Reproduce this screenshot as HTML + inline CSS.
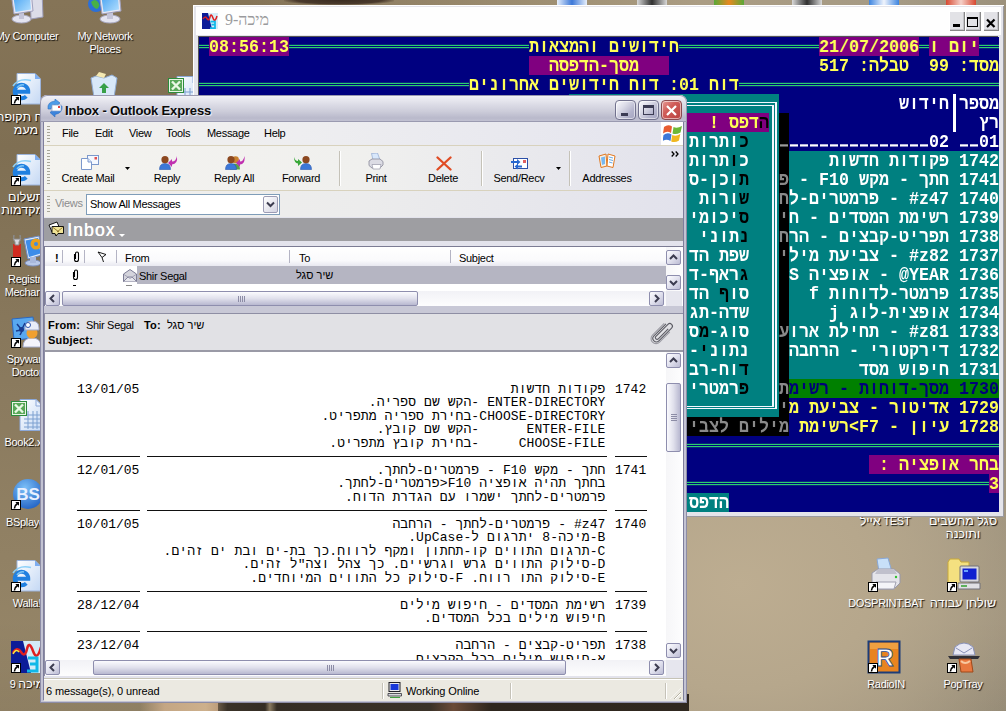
<!DOCTYPE html>
<html lang="he"><head><meta charset="utf-8"><title>Inbox - Outlook Express</title>
<style>
html,body{margin:0;padding:0}
body{width:1006px;height:711px;overflow:hidden;position:relative;font-family:"Liberation Sans",sans-serif;font-size:11px;color:#000;
background:radial-gradient(ellipse 330px 260px at 740px 585px,#bdad91 0,#b6a78c 40%,rgba(172,160,138,0) 100%),linear-gradient(180deg,rgba(0,0,0,0) 0,rgba(0,0,0,0) 620px,rgba(0,0,0,.06) 711px),linear-gradient(90deg,rgba(0,0,0,0) 0,rgba(0,0,0,0) 250px,#a39478 600px,#ab9d84 700px,#a59a84 900px,#9c917c 1006px),linear-gradient(180deg,#857457 0,#7f6f53 150px,#8b7b5f 400px,#978769 711px)}
.a{position:absolute}
/* ---- DOS window ---- */
#dos{position:absolute;left:193px;top:5px;width:811px;height:512px;background:#e4e4ea;box-shadow:inset 1px 1px 0 #fff,inset -1px -1px 0 #9a9aa2}
.dtitle{position:absolute;left:3px;top:2px;width:805px;height:28px;background:#fefefe}
.dicon{position:absolute;left:6px;top:6px;width:16px;height:16px}
.dtext{position:absolute;left:29px;top:4px;font-family:"Liberation Serif",serif;font-weight:normal;font-size:16px;color:#9a9a9c;direction:rtl;white-space:nowrap}
.dbtn{position:absolute;top:4px;width:16px;height:20px;background:#e2e2e6;box-shadow:inset 1px 1px 0 #fff,inset -1px -1px 0 #888,inset -2px -2px 0 #c4c4c8}
.dbtn i{position:absolute;font-style:normal}
.dbtn .mn{left:4px;top:13px;width:7px;height:3px;background:#000}
.dbtn .mx{left:2px;top:6px;border:1px solid #000;border-top-width:2px;box-sizing:border-box;width:11px;height:10px}
.dbtn .cx{left:2px;top:-1px;font-size:17px;font-weight:bold;line-height:19px}
#con{position:absolute;left:6px;top:32px;width:800px;height:425px;transform:scaleY(1.117647);transform-origin:0 0;background:#000080;overflow:hidden;direction:rtl;
font-family:"Liberation Mono",monospace;font-weight:bold;font-size:16.67px;line-height:17px;box-shadow:-1px -1px 0 #555}
.cr{position:absolute;left:0;width:800px;height:17px;white-space:pre;direction:rtl;overflow:hidden;font-size:0}
.sg{display:inline-block;height:17px;vertical-align:top;font-size:16.67px;line-height:17px;white-space:pre;direction:rtl;text-align:right;unicode-bidi:isolate;overflow:hidden;position:relative}
.sg b{font-weight:bold}
.dl i{position:absolute;left:0;right:0;top:7px;height:1px;border-top:1px solid #2fdc6e;border-bottom:1px solid #2fdc6e}
/* ---- Outlook Express window ---- */
#oe{position:absolute;left:40px;top:95px;width:647px;height:608px;background:#c3c3d3;border-radius:7px 7px 0 0;box-shadow:inset 0 0 0 1px #8d8da6;overflow:hidden}
#oe .tb{position:absolute;left:0;top:0;width:647px;height:27px;border-radius:7px 7px 0 0;
background:linear-gradient(#fbfbfd 0,#eeeef4 8%,#dcdce6 35%,#cdcdda 60%,#b9b9cb 85%,#c4c4d4 100%);box-shadow:inset 0 0 0 1px #9a9ab0}
#oe .tt{position:absolute;left:25px;top:8px;font-weight:bold;font-size:13px;color:#0a0a0a;white-space:nowrap;letter-spacing:-0.15px;text-shadow:1px 1px 1px #f4f4f8}
.cb{position:absolute;top:5px;width:21px;height:20px;border-radius:4px;box-sizing:border-box;border:1px solid #72728e;background:linear-gradient(135deg,#fbfbfe 0,#dcdce8 35%,#b4b4cc 70%,#a4a4c0 100%);box-shadow:inset 0 0 0 1px rgba(255,255,255,.55)}
.cb.x{background:linear-gradient(135deg,#e89c98 0,#d05c58 40%,#b84040 100%);border-color:#8a4a50}
#oe .cl{position:absolute;left:4px;top:27px;width:639px;height:578px;background:#e3e3ec;box-shadow:-1px 0 0 #7e7e9c,1px 0 0 #7e7e9c,0 1px 0 #7e7e9c}
.menu{position:absolute;left:0;top:0;width:639px;height:23px;background:linear-gradient(90deg,#f2f1ee 0,#eeeef0 40%,#e4e4ee 100%);border-bottom:1px solid #d8d2bd}
.menu span{position:absolute;top:5px;font-size:11px;white-space:nowrap}
.grip{position:absolute;width:3px;background:repeating-linear-gradient(#a8a698 0,#a8a698 1px,transparent 1px,transparent 3px)}
.tbar{position:absolute;left:0;top:24px;width:639px;height:44px;background:linear-gradient(90deg,#f4f3ef 0,#f0f0ee 50%,#e2e2ec 100%);border-bottom:1px solid #d8d2bd}
.tbtn{position:absolute;top:26px;font-size:11px;white-space:nowrap;transform:translateX(-50%)}
.tsep{position:absolute;top:5px;width:1px;height:35px;background:#c5c2b8;box-shadow:1px 0 0 #fff}
.vbar{position:absolute;left:0;top:69px;width:639px;height:26px;background:linear-gradient(90deg,#f1f0ec 0,#ececec 50%,#e2e2ec 100%)}
.combo{position:absolute;left:42px;top:3px;width:194px;height:21px;box-sizing:border-box;border:1px solid #7f9db9;background:#fff}
.combo span{position:absolute;left:3px;top:3px;font-size:11px;white-space:nowrap}
.cbtn{position:absolute;right:1px;top:1px;width:15px;height:17px;border-radius:2px;border:1px solid #9c9cb4;box-sizing:border-box;background:linear-gradient(135deg,#fff,#d4d4e2)}
.banner{position:absolute;left:0;top:96px;width:639px;height:23px;background:#9e9ea2}
.banner b{position:absolute;left:23px;top:3px;font-weight:normal;font-size:17.5px;line-height:19px;color:#fff;letter-spacing:1.15px !important;text-shadow:.4px 0 0 #fff}
#oe .cl, #oe .cl span{letter-spacing:-0.3px}
.he{font-size:12.5px;letter-spacing:0 !important}
#oe .cl b{letter-spacing:.2px}
/* list */
.list{position:absolute;left:0;top:124px;width:639px;height:60px;background:#fff;box-shadow:inset 1px 1px 0 #7c7c94}
.lh{position:absolute;left:1px;top:1px;width:621px;height:19px;background:linear-gradient(#fff 0,#fafafc 70%,#e8e8f0 100%)}
.lh span,.lr span{position:absolute;top:5px;font-size:11px;white-space:nowrap}
.lh i{position:absolute;top:3px;width:1px;height:13px;background:#b4b4c4}
.lr{position:absolute;left:1px;top:20px;width:621px;height:18px;background:#fff}
.lr .sel{position:absolute;left:92px;top:0;width:529px;height:18px;background:#b5b5c2}
.sb{position:absolute;background:linear-gradient(90deg,#f6f6f8,#fdfdfe)}
.sbb{position:absolute;width:15px;height:15px;box-sizing:border-box;border:1px solid #8e8eae;border-radius:2px;background:linear-gradient(135deg,#fdfdff 0,#e4e4f0 45%,#bcbcd4 100%)}
.sbb svg{position:absolute;left:0;top:0}
.thumb{position:absolute;box-sizing:border-box;border:1px solid #8e8eae;border-radius:2px}
.thumb.h{background:linear-gradient(#fbfbfe 0,#e0e0ec 50%,#b8b8d0 100%)}
.thumb.v{background:linear-gradient(90deg,#fbfbfe 0,#e0e0ec 50%,#b8b8d0 100%)}
.gh{position:absolute;width:7px;height:6px;background:repeating-linear-gradient(90deg,#8c8ca6 0,#8c8ca6 1px,transparent 1px,transparent 2px)}
.gv{position:absolute;width:6px;height:7px;background:repeating-linear-gradient(#8c8ca6 0,#8c8ca6 1px,transparent 1px,transparent 2px)}
.split{position:absolute;left:0;top:184px;width:639px;height:7px;background:#c8c8d6}
.ph{position:absolute;left:0;top:191px;width:639px;height:39px;background:#e1e1e5;box-shadow:inset 1px 1px 0 #8e8ea4,inset 0 -2px 0 #9a9aa6}
.ph span{position:absolute;font-size:11px;white-space:nowrap}
.ph b{font-weight:bold}
.body{position:absolute;left:0;top:230px;width:639px;height:324px;background:#fff;box-shadow:inset 1px 0 0 #8e8ea4;overflow:hidden}
.mt{position:absolute;left:33px;top:0;width:570px;font-family:"Liberation Mono",monospace;font-size:13px;line-height:13.5px;letter-spacing:0 !important;white-space:pre}
.mt div{position:absolute;height:14px;line-height:14px;white-space:pre;letter-spacing:0}
.mt .d{left:0;width:63px}
.mt .t{letter-spacing:.09px;left:68px;width:460.5px;direction:rtl;text-align:right;unicode-bidi:isolate}
.mt .n{left:538px;width:32px}
.mt hr{position:absolute;margin:0;border:0;height:1px;background:#111}
.status{position:absolute;left:0;top:556px;width:639px;height:22px;background:#ebe9e1;border-top:1px solid #c6c3b6;box-shadow:inset 0 1px 0 #fff}
.status span{position:absolute;top:6px;font-size:11px;white-space:nowrap;letter-spacing:-.12px !important}
.status i.s{position:absolute;top:4px;width:1px;height:16px;background:#c5c2b8;box-shadow:1px 0 0 #fff}
.ico{position:absolute;overflow:visible}
.ico svg{position:absolute;left:0;top:0;overflow:visible}
.ico .scx{left:0;top:auto;bottom:0}
.lbl{position:absolute;text-align:center;color:#fff;font-size:11px;line-height:13px;white-space:nowrap;letter-spacing:-.3px;text-shadow:1px 1px 1px rgba(0,0,0,.95)}
.fr{position:absolute;box-sizing:border-box;border:solid #f4f8ff}

</style></head>
<body>
<svg width="0" height="0" style="position:absolute">
<defs>
<linearGradient id="gPage" x1="0" y1="0" x2="1" y2="1"><stop offset="0" stop-color="#ffffff"/><stop offset="1" stop-color="#c4d8f4"/></linearGradient>
<linearGradient id="gScr" x1="0" y1="0" x2="1" y2="1"><stop offset="0" stop-color="#3c9cf0"/><stop offset="1" stop-color="#b4e0ff"/></linearGradient>
<radialGradient id="gBS" cx=".4" cy=".3" r=".8"><stop offset="0" stop-color="#7cc0f8"/><stop offset="1" stop-color="#1c5cc0"/></radialGradient>
</defs></svg>

<div class="ico" style="left:11px;top:-10px;width:34px;height:34px"><svg width="34" height="34" viewBox="0 0 34 34"><path d="M19 0H31L32 27 20 29Z" fill="#dcdce8" stroke="#9c9cb8"/><path d="M22 6H29M22 9H29" stroke="#8888a8"/>
<ellipse cx="10.500" cy="29" rx="9.500" ry="4" fill="#e4e4f0" stroke="#a8a8c0"/><path d="M8 22H13V29H8Z" fill="#c4c4d8"/><path d="M0 2L20 0 22 21 3 24Z" fill="#e8e8f4" stroke="#a0a0bc"/><path d="M2 3.500L18.500 2 20 19.500 4.500 22Z" fill="url(#gScr)"/></svg></div>
<div class="lbl" style="left:-18px;top:30px;width:90px">My Computer</div>
<div class="ico" style="left:88px;top:-10px;width:34px;height:34px"><svg width="34" height="34" viewBox="0 0 34 34"><circle cx="8" cy="14" r="8" fill="#2c70d8"/><path d="M3 12Q7 8 10 12T9 19Q5 18 3 12Z" fill="#48b048"/>
<ellipse cx="22" cy="29" rx="10" ry="4" fill="#e4e4f0" stroke="#a8a8c0"/><path d="M19 22H25V29H19Z" fill="#c4c4d8"/><path d="M11 2L31 0 33 21 14 24Z" fill="#e8e8f4" stroke="#a0a0bc"/><path d="M13 3.500L29.500 2 31 19.500 15.500 22Z" fill="url(#gScr)"/></svg></div>
<div class="lbl" style="left:60px;top:30px;width:90px">My Network<br>Places</div>
<div class="ico" style="left:11px;top:73px;width:32px;height:32px"><svg width="32" height="32" viewBox="0 0 32 32"><path d="M6 .5H24L29.500 6V31H6Z" fill="url(#gPage)" stroke="#9cb4dc"/><path d="M24 .5V6H29.500Z" fill="#7cacf0"/>
<path d="M2 13Q8 4.500 20 7.500" stroke="#8cd0f8" stroke-width="1.600" fill="none"/><path d="M3.700 18.800H17.300A6.800 6.800 0 1 0 15.310 23.310" stroke="#2080e0" stroke-width="3.900" fill="none"/><path d="M6 15Q9 11 13 12" stroke="#7cc4f4" stroke-width="1.500" fill="none"/></svg><svg class="scx" width="10" height="10" viewBox="0 0 10 10"><rect x=".5" y=".5" width="9" height="9" fill="#fff" stroke="#000"/><path d="M8 2H4.300L5.500 3.200Q2.600 5 2.600 8.400H4.200Q4.200 6 6.700 4.400L8 5.700Z" fill="#000"/></svg></div>
<div class="lbl" dir="rtl" style="left:-10px;top:111px;width:72px"><span class="he">דיווח תקופתי</span><br><span class="he">מעמ</span></div>
<div class="ico" style="left:90px;top:74px;width:28px;height:32px"><svg width="28" height="32" viewBox="0 0 28 32"><path d="M1 4L6 2 14 4 22 1 27 4 23 30H5Z" fill="#d8e8f8" stroke="#90acd4"/><path d="M6 2L9 -2 16 0 14 4Z" fill="#f4e8b0"/><path d="M9 14L14 9 19 14H16V19H12V14Z" fill="#38a048"/></svg></div>
<div class="ico" style="left:168px;top:76px;width:32px;height:32px"><svg width="32" height="32" viewBox="0 0 32 32"><path d="M9 .5H25L31.500 7V31.500H9Z" fill="url(#gPage)" stroke="#8ca8d8"/><path d="M25 .5V7H31.500Z" fill="#e8f0fc" stroke="#8ca8d8"/>
<path d="M13 16H29M13 20H29M13 24H29M13 28H29M17 12V30M22 12V30M26 12V30" stroke="#7ca0d0" stroke-width="1"/>
<rect x=".5" y="2.500" width="15" height="14" fill="#e8f4e4" stroke="#2c8c3c"/><rect x="2" y="4" width="12" height="11" fill="#58a858"/><path d="M4 5.500L12 13.500M12 5.500L4 13.500" stroke="#e8f8e4" stroke-width="2.400"/></svg></div>
<div class="ico" style="left:11px;top:154px;width:32px;height:32px"><svg width="32" height="32" viewBox="0 0 32 32"><path d="M6 .5H24L29.500 6V31H6Z" fill="url(#gPage)" stroke="#9cb4dc"/><path d="M24 .5V6H29.500Z" fill="#7cacf0"/>
<path d="M2 13Q8 4.500 20 7.500" stroke="#8cd0f8" stroke-width="1.600" fill="none"/><path d="M3.700 18.800H17.300A6.800 6.800 0 1 0 15.310 23.310" stroke="#2080e0" stroke-width="3.900" fill="none"/><path d="M6 15Q9 11 13 12" stroke="#7cc4f4" stroke-width="1.500" fill="none"/></svg><svg class="scx" width="10" height="10" viewBox="0 0 10 10"><rect x=".5" y=".5" width="9" height="9" fill="#fff" stroke="#000"/><path d="M8 2H4.300L5.500 3.200Q2.600 5 2.600 8.400H4.200Q4.200 6 6.700 4.400L8 5.700Z" fill="#000"/></svg></div>
<div class="lbl" dir="rtl" style="left:-10px;top:191px;width:72px"><span class="he">תשלום</span></div>
<div class="lbl" dir="rtl" style="left:-20px;top:204px;width:64px;text-align:right"><span class="he">מקדמות</span></div>
<div class="ico" style="left:11px;top:235px;width:32px;height:32px"><svg width="32" height="32" viewBox="0 0 32 32"><path d="M13 4L28 1 31 20 17 24Z" fill="#dce8f8" stroke="#6c8cc8"/><path d="M14.500 5.500L27 3 29.500 18.500 18 22Z" fill="#3c8ce8"/><circle cx="25" cy="9" r="5.500" fill="#e8a020"/><circle cx="25" cy="9" r="2" fill="#3c8ce8"/><ellipse cx="22" cy="28" rx="8" ry="3" fill="#b8c8e8" stroke="#7c90c0"/><path d="M19 22H25V28H19Z" fill="#a8b8dc"/>
<path d="M2 9H10V24H2Z" fill="#d02c20"/><path d="M3 0Q1 4 4 7V10H8V7Q11 4 9 0V4H3Z" fill="#d8d8e0" stroke="#888"/></svg><svg class="scx" width="10" height="10" viewBox="0 0 10 10"><rect x=".5" y=".5" width="9" height="9" fill="#fff" stroke="#000"/><path d="M8 2H4.300L5.500 3.200Q2.600 5 2.600 8.400H4.200Q4.200 6 6.700 4.400L8 5.700Z" fill="#000"/></svg></div>
<div class="lbl" style="left:-18px;top:273px;width:90px">Registry<br>Mechanic</div>
<div class="ico" style="left:11px;top:316px;width:32px;height:32px"><svg width="32" height="32" viewBox="0 0 32 32"><path d="M1 3L22 1 24 22 3 24Z" fill="#58a8f0" stroke="#2c68c0"/><path d="M6 8L10 13M14 7L11 13M5 15L10 14M9 19L11 15" stroke="#183c90" stroke-width="1.500"/><circle cx="10.500" cy="13.500" r="2.500" fill="#183c90"/>
<path d="M12 31Q12 22 21 22T30 31Z" fill="#f4f4fc" stroke="#a8b0d0"/><circle cx="21" cy="17" r="5.500" fill="#f0a030"/><path d="M14 12Q14 5 21 5T28 12V14H14Z" fill="#e8ecf8" stroke="#a0a8c8"/><circle cx="17" cy="9" r="2.500" fill="#fff" stroke="#3058b0"/></svg><svg class="scx" width="10" height="10" viewBox="0 0 10 10"><rect x=".5" y=".5" width="9" height="9" fill="#fff" stroke="#000"/><path d="M8 2H4.300L5.500 3.200Q2.600 5 2.600 8.400H4.200Q4.200 6 6.700 4.400L8 5.700Z" fill="#000"/></svg></div>
<div class="lbl" style="left:-18px;top:353px;width:90px">Spyware<br>Doctor</div>
<div class="ico" style="left:11px;top:399px;width:32px;height:32px"><svg width="32" height="32" viewBox="0 0 32 32"><path d="M9 .5H25L31.500 7V31.500H9Z" fill="url(#gPage)" stroke="#8ca8d8"/><path d="M25 .5V7H31.500Z" fill="#e8f0fc" stroke="#8ca8d8"/>
<path d="M13 16H29M13 20H29M13 24H29M13 28H29M17 12V30M22 12V30M26 12V30" stroke="#7ca0d0" stroke-width="1"/>
<rect x=".5" y="2.500" width="15" height="14" fill="#e8f4e4" stroke="#2c8c3c"/><rect x="2" y="4" width="12" height="11" fill="#58a858"/><path d="M4 5.500L12 13.500M12 5.500L4 13.500" stroke="#e8f8e4" stroke-width="2.400"/></svg></div>
<div class="lbl" style="left:-18px;top:436px;width:90px">Book2.xls</div>
<div class="ico" style="left:11px;top:478px;width:32px;height:32px"><svg width="32" height="32" viewBox="0 0 32 32"><circle cx="17" cy="16" r="15" fill="url(#gBS)"/><text x="17" y="22" text-anchor="middle" font-family="Liberation Sans,sans-serif" font-weight="bold" font-size="17" fill="#e8f0ff">BS</text></svg><svg class="scx" width="10" height="10" viewBox="0 0 10 10"><rect x=".5" y=".5" width="9" height="9" fill="#fff" stroke="#000"/><path d="M8 2H4.300L5.500 3.200Q2.600 5 2.600 8.400H4.200Q4.200 6 6.700 4.400L8 5.700Z" fill="#000"/></svg></div>
<div class="lbl" style="left:-18px;top:516px;width:90px">BSplayer</div>
<div class="ico" style="left:11px;top:560px;width:32px;height:32px"><svg width="32" height="32" viewBox="0 0 32 32"><path d="M6 .5H24L29.500 6V31H6Z" fill="url(#gPage)" stroke="#9cb4dc"/><path d="M24 .5V6H29.500Z" fill="#7cacf0"/>
<path d="M2 13Q8 4.500 20 7.500" stroke="#8cd0f8" stroke-width="1.600" fill="none"/><path d="M3.700 18.800H17.300A6.800 6.800 0 1 0 15.310 23.310" stroke="#2080e0" stroke-width="3.900" fill="none"/><path d="M6 15Q9 11 13 12" stroke="#7cc4f4" stroke-width="1.500" fill="none"/></svg><svg class="scx" width="10" height="10" viewBox="0 0 10 10"><rect x=".5" y=".5" width="9" height="9" fill="#fff" stroke="#000"/><path d="M8 2H4.300L5.500 3.200Q2.600 5 2.600 8.400H4.200Q4.200 6 6.700 4.400L8 5.700Z" fill="#000"/></svg></div>
<div class="lbl" style="left:-18px;top:597px;width:90px">Walla!</div>
<div class="ico" style="left:11px;top:641px;width:32px;height:32px"><svg width="32" height="32" viewBox="0 0 32 32"><rect width="32" height="32" fill="#0c1c98"/><path d="M12 0H32V32H20Z" fill="#d4ecf8"/><path d="M2 12Q6 5 10 11T16 8 22 10 30 6" stroke="#e02020" stroke-width="2.500" fill="none"/><path d="M2 13Q5 7 8 11" stroke="#f8e840" stroke-width="1.500" fill="none"/><path d="M17 17H26V30H16M26 23H19" stroke="#10b8e8" stroke-width="3" fill="none"/></svg><svg class="scx" width="10" height="10" viewBox="0 0 10 10"><rect x=".5" y=".5" width="9" height="9" fill="#fff" stroke="#000"/><path d="M8 2H4.300L5.500 3.200Q2.600 5 2.600 8.400H4.200Q4.200 6 6.700 4.400L8 5.700Z" fill="#000"/></svg></div>
<div class="lbl" dir="rtl" style="left:-3px;top:678px;width:60px"><span class="he">מיכה</span> 9</div>
<div class="lbl" style="left:840px;top:515px;width:90px"><span class="he">אייל</span> TEST</div>
<div class="lbl" style="left:918px;top:515px;width:90px" dir="rtl"><span class="he">סגל מחשבים</span><br><span class="he">ותוכנה</span></div>
<div class="ico" style="left:868px;top:558px;width:34px;height:34px"><svg width="34" height="34" viewBox="0 0 34 34"><path d="M9 1L20 0 24 14H11Z" fill="#c8e0f8" stroke="#88a8d8"/><path d="M4 15L10 11H26L32 16V25L26 31H8L4 26Z" fill="#e4e4ea" stroke="#9898a8"/><path d="M10 11H26L29 16H7Z" fill="#c0c0cc"/><path d="M8 24H28L26 31H10Z" fill="#f4f4f8" stroke="#a0a0b0"/><circle cx="28" cy="19" r="1.200" fill="#30c030"/></svg><svg class="scx" width="10" height="10" viewBox="0 0 10 10"><rect x=".5" y=".5" width="9" height="9" fill="#fff" stroke="#000"/><path d="M8 2H4.300L5.500 3.200Q2.600 5 2.600 8.400H4.200Q4.200 6 6.700 4.400L8 5.700Z" fill="#000"/></svg></div>
<div class="lbl" style="left:841px;top:597px;width:90px">DOSPRINT.BAT</div>
<div class="ico" style="left:947px;top:558px;width:34px;height:34px"><svg width="34" height="34" viewBox="0 0 34 34"><path d="M1 4L3 1H12L14 4H22V28H1Z" fill="#f4e080" stroke="#c8a838"/><rect x="13" y="8" width="19" height="16" rx="1" fill="#d8d8dc" stroke="#707078"/><rect x="15.500" y="10.500" width="14" height="11" fill="#1020d0"/><rect x="17" y="12" width="4" height="2" fill="#68a0ff"/><path d="M11 25H33V31H11Z" fill="#e0e0e4" stroke="#707078"/><path d="M14 28H20" stroke="#30a030" stroke-width="1.500"/></svg><svg class="scx" width="10" height="10" viewBox="0 0 10 10"><rect x=".5" y=".5" width="9" height="9" fill="#fff" stroke="#000"/><path d="M8 2H4.300L5.500 3.200Q2.600 5 2.600 8.400H4.200Q4.200 6 6.700 4.400L8 5.700Z" fill="#000"/></svg></div>
<div class="lbl" style="left:918px;top:597px;width:90px" dir="rtl"><span class="he">שולחן עבודה</span></div>
<div class="ico" style="left:868px;top:641px;width:32px;height:32px"><svg width="32" height="32" viewBox="0 0 32 32"><rect x=".5" y=".5" width="31" height="31" fill="#e88420" stroke="#1c3c78" stroke-width="2"/><rect x="2" y="2" width="28" height="6" fill="#f0a040"/><text x="17" y="25" text-anchor="middle" font-family="Liberation Sans,sans-serif" font-weight="bold" font-size="24" fill="#fff" stroke="#284888" stroke-width=".8">R</text></svg><svg class="scx" width="10" height="10" viewBox="0 0 10 10"><rect x=".5" y=".5" width="9" height="9" fill="#fff" stroke="#000"/><path d="M8 2H4.300L5.500 3.200Q2.600 5 2.600 8.400H4.200Q4.200 6 6.700 4.400L8 5.700Z" fill="#000"/></svg></div>
<div class="lbl" style="left:841px;top:678px;width:90px">RadioIN</div>
<div class="ico" style="left:947px;top:641px;width:34px;height:32px"><svg width="34" height="32" viewBox="0 0 34 32"><path d="M8 6Q17 -2 26 6L28 14H6Z" fill="#e8e8f4" stroke="#8890b8"/><path d="M9 7L17 12 25 7" fill="none" stroke="#8890b8"/><path d="M1 15H33L31 18H3Z" fill="#303038"/><path d="M12 18H24L26 31H14Z" fill="#e87840" stroke="#a04818"/><path d="M14 20Q18 24 23 20" stroke="#f8c8a0" stroke-width="2" fill="none"/></svg><svg class="scx" width="10" height="10" viewBox="0 0 10 10"><rect x=".5" y=".5" width="9" height="9" fill="#fff" stroke="#000"/><path d="M8 2H4.300L5.500 3.200Q2.600 5 2.600 8.400H4.200Q4.200 6 6.700 4.400L8 5.700Z" fill="#000"/></svg></div>
<div class="lbl" style="left:918px;top:678px;width:90px">PopTray</div>
<div class="a" style="left:284px;top:0;width:110px;height:5px;background:radial-gradient(ellipse at 50% 0,#3a2c20 0,#4a3a2c 55%,transparent 75%)"></div>
<div class="a" style="left:557px;top:0;width:30px;height:5px;background:linear-gradient(90deg,#e8f0fc 0,#3c78d8 50%,#e8f0fc 100%)"></div>
<div class="a" style="left:637px;top:0;width:30px;height:5px;background:linear-gradient(90deg,#d8d8d8 0,#303030 50%,#d8d8d8 100%)"></div>
<div class="a" style="left:714px;top:0;width:30px;height:5px;background:linear-gradient(90deg,#58a838 0,#e88820 50%,#58a838 100%)"></div>
<div class="a" style="left:792px;top:0;width:30px;height:5px;background:linear-gradient(90deg,#d8d8d8 0,#303030 50%,#d8d8d8 100%)"></div>
<div class="a" style="left:869px;top:0;width:30px;height:5px;background:linear-gradient(90deg,#3c84e0 0,#f0f4fc 50%,#3c84e0 100%)"></div>
<div class="a" style="left:946px;top:0;width:30px;height:5px;background:linear-gradient(90deg,#d84830 0,#f4d0c8 50%,#d84830 100%)"></div>
<div class="a" style="left:140px;top:703px;width:82px;height:8px;background:linear-gradient(90deg,rgba(200,168,134,0) 0,#c4a684 30%,#cdb08c 80%,#b89878 100%)"></div>
<div class="a" style="left:218px;top:694px;width:471px;height:17px;background:linear-gradient(90deg,#6a5a46 0,#3a3228 2%,#352d24 10%,#8a7a60 11%,#352d24 12.5%,#3a3228 45%,#6a4a38 50%,#2e261e 58%,#30281f 100%)"></div>
<div id="dos">
<div class="dtitle"><svg class="dicon" viewBox="0 0 32 32"><rect width="32" height="32" fill="#0c1c98"/><path d="M12 0H32V32H20Z" fill="#d4ecf8"/><path d="M2 12Q6 5 10 11T16 8 22 10 30 6" stroke="#e02020" stroke-width="3" fill="none"/><path d="M17 17H26V30H16M26 23H19" stroke="#10b8e8" stroke-width="3.500" fill="none"/></svg><span class="dtext">מיכה-9</span><span class="dbtn" style="left:753px"><i class="mn"></i></span><span class="dbtn" style="left:769px"><i class="mx"></i></span><span class="dbtn" style="left:787px"><svg width="16" height="20" viewBox="0 0 16 20" style="position:absolute;left:0;top:0"><path d="M4 8.500L11.500 16M11.500 8.500L4 16" stroke="#000" stroke-width="2.200"/></svg></span></div>
<div id="con">
<div class="cr" style="top:0.00px"><span class="sg dl" style="width:20px;"><i></i></span><span class="sg " style="width:50px;color:#ffff55;background:#800080;">יום ו</span><span class="sg dl" style="width:10px;"><i></i></span><span class="sg " style="width:100px;color:#ffff55;background:#800080;">21/07/2006</span><span class="sg dl" style="width:140px;"><i></i></span><span class="sg " style="width:150px;color:#ffff55;">חידושים והמצאות</span><span class="sg dl" style="width:240px;"><i></i></span><span class="sg " style="width:80px;color:#ffff55;background:#800080;">08:56:13</span><span class="sg dl" style="width:10px;"><i></i></span></div>
<div class="cr" style="top:17.00px"><span class="sg " style="width:180px;color:#ffff55;">מסד: 99  טבלה: 517</span><span class="sg " style="width:150px;color:#ffffff;">               </span><span class="sg " style="width:140px;color:#ffff55;background:#800080;">   מסך-הדפסה  </span><span class="sg " style="width:330px;color:#ffffff;">                                 </span></div>
<div class="cr" style="top:34.00px"><span class="sg dl" style="width:260px;"><i></i></span><span class="sg " style="width:270px;color:#ffff55;">דוח 01: דוח חידושים אחרונים</span><span class="sg dl" style="width:270px;"><i></i></span></div>
<div class="cr" style="top:51.00px"><span class="sg hd" style="width:100px;color:#ffffff;">מספר חידוש</span><span class="sg " style="width:120px;color:#ffffff;">            </span><span class="sg " style="width:210px;color:#ffffff;background:#008080;">                     </span></div>
<div class="cr" style="top:68.00px"><span class="sg hd" style="width:50px;color:#ffffff;">רץ   </span><span class="sg " style="width:160px;color:#ffffff;">                </span><span class="sg " style="width:10px;color:#ffffff;background:#000000;"> </span><span class="sg " style="width:10px;color:#ffffff;background:#008080;"> </span><span class="sg" style="width:80px;color:#ffff55;background:#800080"><b style="color:#000000">ה</b>דפס !  </span><span class="sg " style="width:120px;color:#ffffff;background:#800080;">            </span></div>
<div class="cr" style="top:85.00px"><span class="sg " style="width:20px;color:#ffffff;">01</span><span class="sg" style="width:20px;background:repeating-linear-gradient(90deg,#fff 0,#fff 8px,transparent 8px,transparent 10px) 1px 11px/100% 2px no-repeat"></span><span class="sg " style="width:10px;color:#ffffff;"> </span><span class="sg " style="width:20px;color:#ffffff;">02</span><span class="sg" style="width:140px;background:repeating-linear-gradient(90deg,#fff 0,#fff 8px,transparent 8px,transparent 10px) 1px 11px/100% 2px no-repeat"></span><span class="sg" style="width:10px;background:repeating-linear-gradient(90deg,#9a9a9a 0,#9a9a9a 8px,transparent 8px,transparent 10px) 1px 11px/100% 2px no-repeat,#000000"></span><span class="sg " style="width:10px;color:#ffffff;background:#008080;"> </span><span class="sg " style="width:20px;color:#ffffff;background:#008080;">  </span><span class="sg" style="width:60px;color:#ffffff;background:#008080"><b style="color:#000000">כ</b>ותרות</span><span class="sg " style="width:120px;color:#ffffff;background:#008080;">            </span></div>
<div class="cr" style="top:102.00px"><span class="sg " style="width:210px;color:#ffffff;background:#008080;">1742 פקודות חדשות    </span><span class="sg " style="width:10px;color:#8a8a8a;background:#000000;"> </span><span class="sg " style="width:10px;color:#ffffff;background:#008080;"> </span><span class="sg " style="width:20px;color:#ffffff;background:#008080;">  </span><span class="sg" style="width:60px;color:#ffffff;background:#008080">כ<b style="color:#000000">ו</b>תרות</span><span class="sg " style="width:120px;color:#ffffff;background:#008080;">            </span></div>
<div class="cr" style="top:119.00px"><span class="sg " style="width:210px;color:#ffffff;background:#008080;">1741 חתך - מקש F10 - </span><span class="sg " style="width:10px;color:#8a8a8a;background:#000000;">פ</span><span class="sg " style="width:10px;color:#ffffff;background:#008080;"> </span><span class="sg " style="width:20px;color:#ffffff;background:#008080;">  </span><span class="sg" style="width:60px;color:#ffffff;background:#008080"><b style="color:#000000">ת</b>וכן-ס</span><span class="sg " style="width:120px;color:#ffffff;background:#008080;">            </span></div>
<div class="cr" style="top:136.00px"><span class="sg " style="width:210px;color:#ffffff;background:#008080;">1740 ‎#z47 - פרמטרים-ל</span><span class="sg " style="width:10px;color:#8a8a8a;background:#000000;">ח</span><span class="sg " style="width:10px;color:#ffffff;background:#008080;"> </span><span class="sg " style="width:20px;color:#ffffff;background:#008080;">  </span><span class="sg" style="width:50px;color:#ffffff;background:#008080"><b style="color:#000000">ש</b>ורות</span><span class="sg " style="width:130px;color:#ffffff;background:#008080;">             </span></div>
<div class="cr" style="top:153.00px"><span class="sg " style="width:210px;color:#ffffff;background:#008080;">1739 רשימת המסדים - ח</span><span class="sg " style="width:10px;color:#8a8a8a;background:#000000;">י</span><span class="sg " style="width:10px;color:#ffffff;background:#008080;"> </span><span class="sg " style="width:20px;color:#ffffff;background:#008080;">  </span><span class="sg" style="width:60px;color:#ffffff;background:#008080"><b style="color:#000000">ס</b>יכומי</span><span class="sg " style="width:120px;color:#ffffff;background:#008080;">            </span></div>
<div class="cr" style="top:170.00px"><span class="sg " style="width:210px;color:#ffffff;background:#008080;">1738 תפריט-קבצים - הר</span><span class="sg " style="width:10px;color:#8a8a8a;background:#000000;">ח</span><span class="sg " style="width:10px;color:#ffffff;background:#008080;"> </span><span class="sg " style="width:20px;color:#ffffff;background:#008080;">  </span><span class="sg" style="width:50px;color:#ffffff;background:#008080"><b style="color:#000000">נ</b>תוני</span><span class="sg " style="width:130px;color:#ffffff;background:#008080;">             </span></div>
<div class="cr" style="top:187.00px"><span class="sg " style="width:210px;color:#ffffff;background:#008080;">1737 ‎#z82 - צביעת מיל</span><span class="sg " style="width:10px;color:#8a8a8a;background:#000000;">י</span><span class="sg " style="width:10px;color:#ffffff;background:#008080;"> </span><span class="sg " style="width:20px;color:#ffffff;background:#008080;">  </span><span class="sg" style="width:60px;color:#ffffff;background:#008080">שפת הד</span><span class="sg " style="width:120px;color:#ffffff;background:#008080;">            </span></div>
<div class="cr" style="top:204.00px"><span class="sg " style="width:210px;color:#ffffff;background:#008080;">1736 ‎@YEAR - אופציה S</span><span class="sg " style="width:10px;color:#8a8a8a;background:#000000;"> </span><span class="sg " style="width:10px;color:#ffffff;background:#008080;"> </span><span class="sg " style="width:20px;color:#ffffff;background:#008080;">  </span><span class="sg" style="width:60px;color:#ffffff;background:#008080"><b style="color:#000000">ג</b>ראף-ד</span><span class="sg " style="width:120px;color:#ffffff;background:#008080;">            </span></div>
<div class="cr" style="top:221.00px"><span class="sg " style="width:210px;color:#ffffff;background:#008080;">1735 פרמטר-לדוחות f  </span><span class="sg " style="width:10px;color:#8a8a8a;background:#000000;"> </span><span class="sg " style="width:10px;color:#ffffff;background:#008080;"> </span><span class="sg " style="width:20px;color:#ffffff;background:#008080;">  </span><span class="sg" style="width:60px;color:#ffffff;background:#008080">סו<b style="color:#000000">ף</b> הד</span><span class="sg " style="width:120px;color:#ffffff;background:#008080;">            </span></div>
<div class="cr" style="top:238.00px"><span class="sg " style="width:210px;color:#ffffff;background:#008080;">1734 אופצית-לוג j    </span><span class="sg " style="width:10px;color:#8a8a8a;background:#000000;"> </span><span class="sg " style="width:10px;color:#ffffff;background:#008080;"> </span><span class="sg " style="width:20px;color:#ffffff;background:#008080;">  </span><span class="sg" style="width:60px;color:#ffffff;background:#008080">שדה-תג</span><span class="sg " style="width:120px;color:#ffffff;background:#008080;">            </span></div>
<div class="cr" style="top:255.00px"><span class="sg " style="width:210px;color:#ffffff;background:#008080;">1733 ‎#z81 - תחילת ארו</span><span class="sg " style="width:10px;color:#8a8a8a;background:#000000;">ע</span><span class="sg " style="width:10px;color:#ffffff;background:#008080;"> </span><span class="sg " style="width:20px;color:#ffffff;background:#008080;">  </span><span class="sg" style="width:60px;color:#ffffff;background:#008080">סוג-<b style="color:#000000">מ</b>ס</span><span class="sg " style="width:120px;color:#ffffff;background:#008080;">            </span></div>
<div class="cr" style="top:272.00px"><span class="sg " style="width:210px;color:#ffffff;background:#008080;">1732 דירקטורי - הרחבה</span><span class="sg " style="width:10px;color:#8a8a8a;background:#000000;"> </span><span class="sg " style="width:10px;color:#ffffff;background:#008080;"> </span><span class="sg " style="width:20px;color:#ffffff;background:#008080;">  </span><span class="sg" style="width:60px;color:#ffffff;background:#008080">נתונ<b style="color:#000000">י</b>-</span><span class="sg " style="width:120px;color:#ffffff;background:#008080;">            </span></div>
<div class="cr" style="top:289.00px"><span class="sg " style="width:210px;color:#ffffff;background:#008080;">1731 חיפוש מסד       </span><span class="sg " style="width:10px;color:#8a8a8a;background:#000000;"> </span><span class="sg " style="width:10px;color:#ffffff;background:#008080;"> </span><span class="sg " style="width:20px;color:#ffffff;background:#008080;">  </span><span class="sg" style="width:60px;color:#ffffff;background:#008080"><b style="color:#000000">ד</b>וח-רב</span><span class="sg " style="width:120px;color:#ffffff;background:#008080;">            </span></div>
<div class="cr" style="top:306.00px"><span class="sg " style="width:210px;color:#000078;background:#008000;">1730 מסך-דוחות - רשימ</span><span class="sg " style="width:10px;color:#8a8a8a;background:#000000;">ת</span><span class="sg " style="width:10px;color:#ffffff;background:#008080;"> </span><span class="sg " style="width:20px;color:#ffffff;background:#008080;">  </span><span class="sg" style="width:60px;color:#ffffff;background:#008080"><b style="color:#000000">פ</b>רמטרי</span><span class="sg " style="width:120px;color:#ffffff;background:#008080;">            </span></div>
<div class="cr" style="top:323.00px"><span class="sg " style="width:210px;color:#ffff55;background:#000080;">1729 אדיטור - צביעת מ</span><span class="sg " style="width:10px;color:#8a8a8a;background:#000000;">י</span><span class="sg " style="width:210px;color:#ffffff;background:#008080;">                     </span></div>
<div class="cr" style="top:340.00px"><span class="sg " style="width:210px;color:#ffff55;background:#000080;">1728 עיון - F7&gt;רשימת </span><span class="sg " style="width:400px;color:#8a8a8a;background:#000000;">מילים לצבי                              </span></div>
<div class="cr" style="top:357.00px"><span class="sg dl" style="width:800px;"><i></i></span></div>
<div class="cr" style="top:374.00px"><span class="sg " style="width:130px;color:#ffff55;background:#800080;">בחר אופציה : </span><span class="sg " style="width:670px;color:#ffffff;">                                                                   </span></div>
<div class="cr" style="top:391.00px"><span class="sg " style="width:10px;color:#ffff55;background:#800080;">3</span><span class="sg dl" style="width:790px;"><i></i></span></div>
<div class="cr" style="top:408.00px"><span class="sg " style="width:270px;color:#ffffff;">                           </span><span class="sg " style="width:40px;color:#ffffff;background:#008080;">הדפס</span><span class="sg " style="width:490px;color:#ffffff;background:#008080;">                                                 </span></div>
<i style="position:absolute;left:754px;top:51px;width:2.5px;height:34px;background:#fff"></i></div>
<i class="fr" style="left:301px;width:283px;top:97px;height:307px;border-width:1.5px 2px 1.5px 2px"></i><i class="fr" style="left:301px;width:280px;top:99.6px;height:302.2px;border-width:1.3px 2px 1.5px 2px"></i></div>
<div id="oe">
<div class="tb"><svg class="a" style="left:6px;top:4px" width="18" height="18" viewBox="0 0 18 18"><path d="M2 10Q1 3 9 2V0L14 4 9 8V5.500Q5 6 5 10Z" fill="#4c9ce8" stroke="#2c6cc0" stroke-width=".6"/><path d="M16 7Q17 14 9 15.500V18L4 13.500 9 9.500V12Q13 11.500 13 7Z" fill="#3c84dc" stroke="#2c6cc0" stroke-width=".6"/><rect x="6" y="6" width="9" height="6" fill="#fff" stroke="#88a0c8" stroke-width=".7"/><rect x="12" y="7" width="2" height="2" fill="#e04040"/></svg><span class="tt">Inbox - Outlook Express</span>
<span class="cb" style="left:575px"><i style="position:absolute;left:5px;top:12px;width:7px;height:3px;background:#3c3c54"></i></span><span class="cb" style="left:598px"><i style="position:absolute;left:4px;top:4px;width:11px;height:10px;box-sizing:border-box;border:1px solid #3c3c54;border-top-width:3px"></i></span><span class="cb x" style="left:621px"><svg class="a" style="left:3px;top:3px" width="13" height="13" viewBox="0 0 13 13"><path d="M2 2L11 11M11 2L2 11" stroke="#fff" stroke-width="2.200"/></svg></span></div>
<div class="cl">
<div class="menu"><i class="grip" style="left:3px;top:4px;height:16px"></i>
<span style="left:18px">File</span><span style="left:51px">Edit</span><span style="left:85px">View</span><span style="left:122px">Tools</span><span style="left:163px">Message</span><span style="left:220px">Help</span><i class="a" style="left:617px;top:0;width:22px;height:23px;background:#fff"></i><svg class="a" style="left:619px;top:2px" width="20" height="19" viewBox="0 0 20 19"><path d="M1 3Q5 0 9 2.500L8 9Q4 6.500 0 9.500Z" fill="#e85c30"/><path d="M10.500 3Q14 5 19 2L17.500 8.500Q13 11 9.500 9.500Z" fill="#6cb838"/><path d="M0 11Q4 8 8 10.500L7 17Q3 14.500 -1 17Z" fill="#3c78d8" transform="translate(.5 0)"/><path d="M9.200 11Q13 13 17.300 10L16 16.500Q12 19 8.200 17.500Z" fill="#f0b820"/></svg></div>
<div class="tbar"><i class="grip" style="left:3px;top:4px;height:36px"></i>
<span class="tbtn" style="left:44px">Create Mail</span><span class="tbtn" style="left:123px">Reply</span><span class="tbtn" style="left:190px">Reply All</span><span class="tbtn" style="left:257px">Forward</span>
<span class="tbtn" style="left:332px">Print</span><span class="tbtn" style="left:399px">Delete</span><span class="tbtn" style="left:475px">Send/Recv</span><span class="tbtn" style="left:563px">Addresses</span>

<svg class="a" style="left:37px;top:9px" width="18" height="15" viewBox="0 0 18 15"><rect x="6.500" y=".5" width="11" height="9" fill="#f4f8ff" stroke="#7c98cc"/><rect x="13.500" y="2" width="2.500" height="2.500" fill="#e05050"/><path d="M.5 3.500H7L10.500 7V14.500H.5Z" fill="#fff" stroke="#7c98cc"/><path d="M7 3.500V7H10.500" fill="#dce8fc" stroke="#7c98cc"/></svg>
<svg class="a" style="left:81px;top:21px" width="5" height="3" viewBox="0 0 5 3"><path d="M0 0H5L2.500 3Z" fill="#000"/></svg>
<svg class="a" style="left:115px;top:9px" width="19" height="15" viewBox="0 0 19 15"><path d="M.5 14.500Q.5 8.500 6 8.500T11.500 14.500Z" fill="#3c78d8" stroke="#2858b0" stroke-width=".6"/><circle cx="6" cy="4.700" r="3.600" fill="#8c4820"/><path d="M18 1Q17 6.500 13 6.500V4L9 8 13 12V9.500Q19 9 18 1Z" fill="#c030b0"/></svg>
<svg class="a" style="left:181px;top:9px" width="20" height="15" viewBox="0 0 20 15"><path d="M5 14.500Q5 8.500 10 8.500T15 14.500Z" fill="#58a048"/><circle cx="10.500" cy="4.700" r="3.400" fill="#c88030"/><path d="M.5 14.500Q.5 8.500 6 8.500T11.500 14.500Z" fill="#3c78d8" stroke="#2858b0" stroke-width=".6"/><circle cx="6" cy="4.700" r="3.600" fill="#8c4820"/><path d="M19.500 1Q18.500 6.500 15 6.500V4L11 8 15 12V9.500Q20.500 9 19.500 1Z" fill="#c030b0"/></svg>
<svg class="a" style="left:250px;top:9px" width="18" height="15" viewBox="0 0 18 15"><path d="M6.500 14.500Q6.500 8.500 12 8.500T17.500 14.500Z" fill="#3c78d8" stroke="#2858b0" stroke-width=".6"/><circle cx="12" cy="4.700" r="3.600" fill="#8c4820"/><path d="M0 2Q1 6 4 6V4L8 7.500 4 11V8.500Q0 8 0 2Z" fill="#38a838"/></svg>
<svg class="a" style="left:324px;top:7px" width="16" height="17" viewBox="0 0 16 17"><path d="M3.500 0.500L9.500 0 12 7H5Z" fill="#d8e8fc" stroke="#90a8d0" stroke-width=".7"/><path d="M1 8L4 6H12L15 8.500V12L12 15H4L1 12.500Z" fill="#dcdce4" stroke="#888898" stroke-width=".8"/><path d="M4 11.500H13L12 16H5Z" fill="#fff" stroke="#9898a8" stroke-width=".7"/></svg>
<svg class="a" style="left:392px;top:10px" width="16" height="15" viewBox="0 0 16 15"><path d="M1.500 1.500L14.500 13.500M14.500 1.500L1.500 13.500" stroke="#e04c24" stroke-width="2.300" stroke-linecap="round"/></svg>
<svg class="a" style="left:467px;top:11px" width="18" height="13" viewBox="0 0 18 13"><rect x="2.500" y="1.500" width="14" height="10" fill="#fff" stroke="#2c50a8"/><rect x="12" y="3" width="3" height="3" fill="#e06060"/><path d="M0 4H6V2L9.500 5 6 8V6H0Z" fill="#2868d0"/><path d="M11 10.500H7V12.500L3.500 9.500 7 6.500V8.500H11Z" fill="#2868d0"/></svg>
<svg class="a" style="left:512px;top:21px" width="5" height="3" viewBox="0 0 5 3"><path d="M0 0H5L2.500 3Z" fill="#000"/></svg>
<svg class="a" style="left:554px;top:7px" width="18" height="15" viewBox="0 0 18 15"><path d="M1 3L8 1 9 13 3 14.500Z" fill="#f8f0e4" stroke="#e07820"/><path d="M17 3L10 1 9 13 15 14.500Z" fill="#fff" stroke="#e07820"/><path d="M11 4L15 5M11 6.500L15 7.500M11 9L14.500 10" stroke="#58a0e0" stroke-width=".9"/><path d="M3 4.500L7 3.500V11L4 12Z" fill="#78b8f0"/></svg>
<svg class="a" style="left:627px;top:5px" width="9" height="6" viewBox="0 0 9 6"><path d="M.7 .5L3 3 .7 5.500M4.700 .5L7 3 4.700 5.500" stroke="#000" stroke-width="1.300" fill="none"/></svg>
<i class="tsep" style="left:295px"></i><i class="tsep" style="left:437px"></i><i class="tsep" style="left:525px"></i>
</div>
<div class="vbar"><i class="grip" style="left:3px;top:5px;height:16px"></i><span class="a" style="left:11px;top:6px;color:#8c8c8c">Views</span>
<div class="combo"><span>Show All Messages</span><i class="cbtn"><svg class="a" style="left:2px;top:4px" width="9" height="7" viewBox="0 0 9 7"><path d="M1 1.500L4.500 5 8 1.500" fill="none" stroke="#3c3c50" stroke-width="2"/></svg></i></div></div>
<div class="banner"><svg class="a" style="left:4px;top:3px" width="17" height="17" viewBox="0 0 17 17"><path d="M1 4L9 1 12 8 4 11Z" fill="#fff" stroke="#000" stroke-width=".9"/><path d="M4 5.500H15.500V12.500H10L8 15 7 12.500H4Z" fill="#f0e498" stroke="#000" stroke-width=".9"/><path d="M5 6.500L11 11M14.500 6.500L9 11" stroke="#806010" stroke-width=".8"/></svg><b>Inbox</b><svg class="a" style="left:75px;top:16px" width="6" height="4" viewBox="0 0 6 4"><path d="M0 0H6L3 3Z" fill="#fff"/></svg></div>
<!--LOW-->
<div class="list">
<div class="lh"><span style="left:10px;font-weight:bold">!</span><svg class="a" style="left:28px;top:4px" width="7" height="12" viewBox="0 0 7 12"><path d="M1.500 3V8.500A2 2 0 0 0 5.500 8.500V2.500A1.500 1.500 0 0 0 2.500 2.500V8" fill="none" stroke="#000" stroke-width="1.100"/></svg><svg class="a" style="left:52px;top:4px" width="10" height="12" viewBox="0 0 10 12"><path d="M1 1L9 3.500 5 6.500Z" fill="#fff" stroke="#000" stroke-width=".9"/><path d="M5 6.500L6.500 11" stroke="#000" stroke-width=".9"/></svg><span style="left:80px">From</span><span style="left:254px">To</span><span style="left:414px">Subject</span>
<i style="left:17px"></i><i style="left:39px"></i><i style="left:71px"></i><i style="left:244px"></i><i style="left:405px"></i></div>
<div class="lr"><i class="sel"></i><svg class="a" style="left:27px;top:3px" width="7" height="12" viewBox="0 0 7 12"><path d="M1.500 3V8.500A2 2 0 0 0 5.500 8.500V2.500A1.500 1.500 0 0 0 2.500 2.500V8" fill="none" stroke="#000" stroke-width="1.100"/></svg><svg class="a" style="left:78px;top:3px" width="14" height="13" viewBox="0 0 14 13"><path d="M.5 5L7 .5 13.500 5V12.500H.5Z" fill="#d4d4dc" stroke="#70708c" stroke-width=".9"/><path d="M.5 12.500L5 8H9L13.500 12.500" fill="#e8e8ee" stroke="#70708c" stroke-width=".8"/><path d="M1 5.500L7 9.500 13 5.500" fill="none" stroke="#8c8ca4" stroke-width=".7"/></svg><span style="left:94px;top:4px">Shir Segal</span><span style="left:251px;top:3px" dir="rtl" class="he">שיר סגל</span></div>
<div class="a" style="left:29px;top:39px;width:3px;height:1px;background:#000"></div><div class="a" style="left:82px;top:39px;width:6px;height:1px;background:#888"></div><div class="sb" style="left:622px;top:1px;width:16px;height:44px"><i class="sbb" style="left:0;top:3px"><svg width="13" height="13" viewBox="0 0 13 13"><path d="M3 8l3.5-3.5L10 8" fill="none" stroke="#3c3c50" stroke-width="2"/></svg></i><i class="sbb" style="left:0;top:28px"><svg width="13" height="13" viewBox="0 0 13 13"><path d="M3 5l3.5 3.5L10 5" fill="none" stroke="#3c3c50" stroke-width="2"/></svg></i></div>
<div class="sb" style="left:1px;top:45px;width:621px;height:15px;background:linear-gradient(#f2f2f6,#fdfdfe)"><i class="sbb" style="left:0;top:0"><svg width="13" height="13" viewBox="0 0 13 13"><path d="M8 3L4.5 6.5 8 10" fill="none" stroke="#3c3c50" stroke-width="2"/></svg></i><i class="thumb h" style="left:17px;top:0;width:356px;height:15px"><i class="gh" style="left:175px;top:4px"></i></i><i class="sbb" style="left:604px;top:0"><svg width="13" height="13" viewBox="0 0 13 13"><path d="M5 3l3.5 3.5L5 10" fill="none" stroke="#3c3c50" stroke-width="2"/></svg></i></div>
<div class="a" style="left:622px;top:45px;width:16px;height:15px;background:#e6e6ee"></div>
</div>
<div class="split"></div>
<div class="ph"><span style="left:4px;top:6px"><b>From:</b></span><span style="left:42px;top:6px">Shir Segal</span><span style="left:100px;top:6px"><b>To:</b></span><span style="left:123px;top:6px" dir="rtl" class="he">שיר סגל</span><span style="left:4px;top:21px"><b>Subject:</b></span><svg class="a" style="left:604px;top:7px" width="26" height="26" viewBox="0 0 26 26"><g fill="none" stroke="#5c5c64" stroke-width="1.100" transform="rotate(45 13 13)"><path d="M10 3V20A3.500 3.500 0 0 0 17 20V2A2.600 2.600 0 0 0 11.800 2V19A1.700 1.700 0 0 0 15.200 19V5"/><path d="M8.500 4V20.500A5 5 0 0 0 18.500 20.500V6" stroke="#9c9ca4"/></g></svg></div>
<div class="body">
<div class="mt">
<div class="d"None style="top:30.5px">13/01/05</div>
<div class="t" dir="rtl" style="top:30.5px">פקודות חדשות</div>
<div class="n"None style="top:30.5px">1742</div>
<div class="t" dir="rtl" style="top:44.0px">ENTER-DIRECTORY -הקש שם ספריה.</div>
<div class="t" dir="rtl" style="top:57.5px">CHOOSE-DIRECTORY-בחירת ספריה מתפריט.</div>
<div class="t" dir="rtl" style="top:71.0px">ENTER-FILE      -הקש שם קובץ.</div>
<div class="t" dir="rtl" style="top:84.5px">CHOOSE-FILE     -בחירת קובץ מתפריט.</div>
<hr style="left:0;top:103.5px;width:63px"><hr style="left:70px;top:103.5px;width:460px"><hr style="left:538px;top:103.5px;width:32px">
<div class="d"None style="top:111.5px">12/01/05</div>
<div class="t" dir="rtl" style="top:111.5px">חתך - מקש F10 - פרמטרים-לחתך.</div>
<div class="n"None style="top:111.5px">1741</div>
<div class="t" dir="rtl" style="top:125.0px">בחתך תהיה אופציה F10&lt;פרמטרים-לחתך.</div>
<div class="t" dir="rtl" style="top:138.5px">פרמטרים-לחתך ישמרו עם הגדרת הדוח.</div>
<hr style="left:0;top:157.5px;width:63px"><hr style="left:70px;top:157.5px;width:460px"><hr style="left:538px;top:157.5px;width:32px">
<div class="d"None style="top:165.5px">10/01/05</div>
<div class="t" dir="rtl" style="top:165.5px">‎#z47 - פרמטרים-לחתך - הרחבה</div>
<div class="n"None style="top:165.5px">1740</div>
<div class="t" dir="rtl" style="top:179.0px">B-מיכה-8 יתרגום ל-UpCase.</div>
<div class="t" dir="rtl" style="top:192.5px">C-תרגום התווים קו-תחתון ומקף לרווח.כך בת-ים ובת ים זהים.</div>
<div class="t" dir="rtl" style="top:206.0px">D-סילוק התווים גרש וגרשיים. כך צהל וצה"ל זהים.</div>
<div class="t" dir="rtl" style="top:219.5px">E-סילוק התו רווח. F-סילוק כל התווים המיוחדים.</div>
<hr style="left:0;top:238.5px;width:63px"><hr style="left:70px;top:238.5px;width:460px"><hr style="left:538px;top:238.5px;width:32px">
<div class="d"None style="top:246.5px">28/12/04</div>
<div class="t" dir="rtl" style="top:246.5px">רשימת המסדים - חיפוש מילים</div>
<div class="n"None style="top:246.5px">1739</div>
<div class="t" dir="rtl" style="top:260.0px">חיפוש מילים בכל המסדים.</div>
<hr style="left:0;top:279.0px;width:63px"><hr style="left:70px;top:279.0px;width:460px"><hr style="left:538px;top:279.0px;width:32px">
<div class="d"None style="top:287.0px">23/12/04</div>
<div class="t" dir="rtl" style="top:287.0px">תפריט-קבצים - הרחבה</div>
<div class="n"None style="top:287.0px">1738</div>
<div class="t" dir="rtl" style="top:300.5px">א-חיפוש מילים בכל הקבצים.</div>
</div>
<div class="sb" style="left:622px;top:0;width:16px;height:308px"><i class="sbb" style="left:0;top:1px"><svg width="13" height="13" viewBox="0 0 13 13"><path d="M3 8l3.5-3.5L10 8" fill="none" stroke="#3c3c50" stroke-width="2"/></svg></i><i class="thumb v" style="left:0;top:31px;width:15px;height:69px"><i class="gv" style="left:4px;top:30px"></i></i><i class="sbb" style="left:0;top:291px"><svg width="13" height="13" viewBox="0 0 13 13"><path d="M3 5l3.5 3.5L10 5" fill="none" stroke="#3c3c50" stroke-width="2"/></svg></i></div>
<div class="sb" style="left:1px;top:308px;width:621px;height:16px;background:linear-gradient(#f2f2f6,#fdfdfe)"><i class="sbb" style="left:0;top:0"><svg width="13" height="13" viewBox="0 0 13 13"><path d="M8 3L4.5 6.5 8 10" fill="none" stroke="#3c3c50" stroke-width="2"/></svg></i><i class="thumb h" style="left:48px;top:0;width:473px;height:15px"><i class="gh" style="left:233px;top:4px"></i></i><i class="sbb" style="left:604px;top:0"><svg width="13" height="13" viewBox="0 0 13 13"><path d="M5 3l3.5 3.5L5 10" fill="none" stroke="#3c3c50" stroke-width="2"/></svg></i></div>
<div class="a" style="left:622px;top:308px;width:17px;height:16px;background:#e6e6ee"></div>
</div>
<div class="status"><span style="left:2px">6 message(s), 0 unread</span><svg class="a" style="left:343px;top:3px" width="16" height="16" viewBox="0 0 16 16"><rect x="2" y=".5" width="11" height="9" fill="#e8e8ec" stroke="#202028"/><rect x="3.500" y="2" width="8" height="6" fill="#1838d8"/><path d="M1 11.500H14.500V14H1Z" fill="#d8d8dc" stroke="#303038" stroke-width=".8"/><path d="M3 15.500H13" stroke="#40a040" stroke-width="1.200"/></svg><span style="left:362px">Working Online</span><i class="s" style="left:338px"></i><i class="s" style="left:466px"></i><i class="s" style="left:621px"></i><i class="a" style="left:626px;top:9px;width:11px;height:11px;background:repeating-linear-gradient(135deg,transparent 0,transparent 2px,#b8b4a4 2px,#b8b4a4 3px,#fff 3px,#fff 4px);clip-path:polygon(100% 0,100% 100%,0 100%)"></i></div>
<!--/LOW-->
</div>
</div>
</body></html>
